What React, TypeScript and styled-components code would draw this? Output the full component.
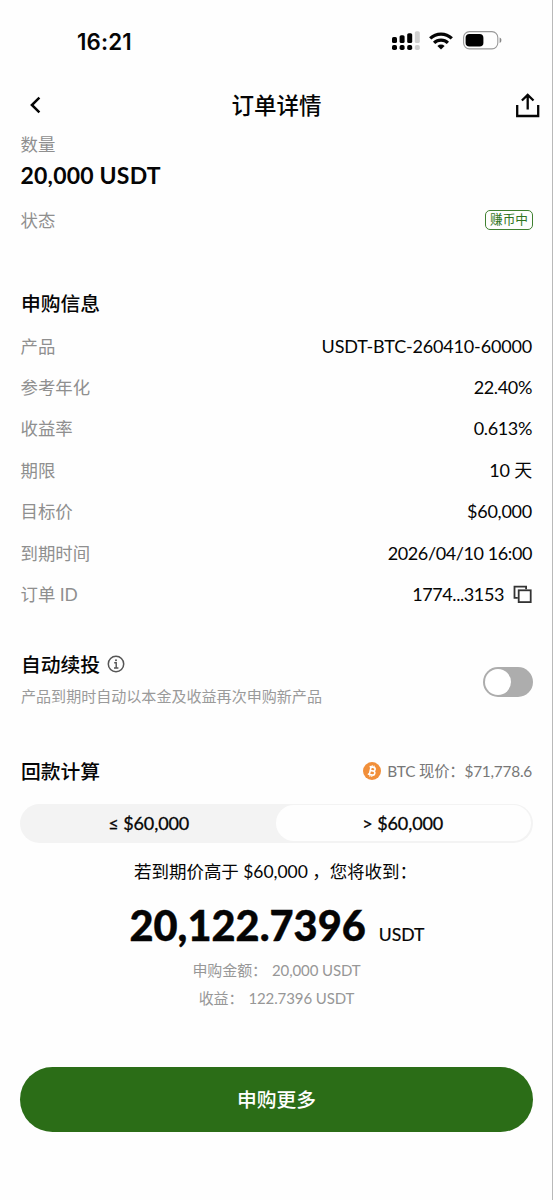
import React from 'react';
import styled, { createGlobalStyle, css } from 'styled-components';

const Global = createGlobalStyle`
  * { box-sizing: border-box; }
  body {
    margin: 0;
    background: #fefefe;
    color: #050505;
    font-family: Lato, "Noto Sans CJK SC", sans-serif;
    font-variant-ligatures: none;
  }
  button { font: inherit; color: inherit; border: 0; padding: 0; background: none; }
`;

const Screen = styled.main`
  width: 553px;
  height: 1200px;
  padding: 0 19px 0 21px;
  border-right: 1px solid #b9b9b9;
  display: flex;
  flex-direction: column;
  overflow: hidden;
`;

const StatusBar = styled.div`
  height: 82px;
  flex: none;
  display: flex;
  align-items: center;
  justify-content: space-between;
  padding: 0 31px 0 56px;
`;

const Clock = styled.span`
  font: 600 22.3px/26px Inter, sans-serif;
  letter-spacing: 0.15px;
  padding-top: 2px;
`;

const StatusIcons = styled.div`
  display: flex;
  align-items: center;
  margin-top: -1px;
`;

const Header = styled.header`
  height: 47px;
  flex: none;
  display: grid;
  grid-template-columns: 60px 1fr 60px;
  align-items: center;
  margin-right: -7px;
`;

const Title = styled.h1`
  margin: 0;
  padding: 1px 8px 0 0;
  text-align: center;
  font-size: 22.5px;
  line-height: 32px;
  font-weight: 500;
`;

const IconButton = styled.button<{ $end?: boolean }>`
  display: flex;
  height: 32px;
  align-items: center;
  margin-bottom: 2px;
  justify-content: ${(p) => (p.$end ? 'flex-end' : 'flex-start')};
`;

const Label = styled.span`
  font-size: 17.4px;
  line-height: 26px;
  margin-left: -0.5px;
  color: #8f8f8f;
`;

const Amount = styled.div`
  font-size: 23px;
  line-height: 32px;
  font-weight: 700;
  letter-spacing: 0.2px;
  margin: 1px 0 0 -0.5px;
`;

const Summary = styled.section`
  display: flex;
  flex-direction: column;
  padding-top: 3px;
`;

const StatusRow = styled.div`
  display: flex;
  align-items: center;
  justify-content: space-between;
  height: 26px;
  margin-top: 17px;
`;

const Tag = styled.span`
  height: 20px;
  width: 48px;
  margin-bottom: 2px;
  border: 1.5px solid #3f8030;
  border-radius: 5px;
  color: #2f7420;
  font-size: 12.7px;
  line-height: 17px;
  text-align: center;
`;

const SectionTitle = styled.h2`
  margin: 0;
  font-size: 19.8px;
  line-height: 30px;
  font-weight: 500;
`;

const Info = styled.section`
  margin-top: 54px;
`;

const InfoRow = styled.div`
  height: 41.4px;
  padding-right: 1px;
  display: flex;
  align-items: center;
  justify-content: space-between;
`;

const InfoList = styled.div`
  margin-top: 8px;
`;

const Value = styled.span<{ $spacing?: number }>`
  display: flex;
  align-items: center;
  gap: 9px;
  margin-bottom: 2px;
  font-size: 18px;
  line-height: 26px;
  letter-spacing: ${(p) => p.$spacing ?? 0}px;
`;

const Renew = styled.section`
  margin-top: 33px;
  display: flex;
  align-items: center;
  justify-content: space-between;
`;

const RenewTitle = styled.div`
  display: flex;
  align-items: center;
  gap: 7px;
`;

const Hint = styled.p`
  margin: 5px 0 0;
  font-size: 15.05px;
  line-height: 24px;
  color: #9a9a9a;
`;

const Switch = styled.button`
  width: 50px;
  height: 30px;
  border-radius: 15px;
  background: #adadad;
  padding: 2px;
  margin-top: 8px;
  display: flex;
`;

const Knob = styled.span`
  width: 26px;
  height: 26px;
  border-radius: 50%;
  background: #fff;
`;

const PayoutHead = styled.div`
  margin-top: 48px;
  display: flex;
  align-items: center;
  justify-content: space-between;
`;

const Price = styled.div`
  display: flex;
  align-items: center;
  gap: 6px;
  padding-right: 1px;
  font-size: 15.4px;
  line-height: 24px;
  letter-spacing: -0.23px;
  color: #777;
`;

const Tabs = styled.div`
  flex: none;
  height: 39px;
  margin: 18px 0 0 -1px;
  padding: 1.5px 2px;
  border-radius: 20px;
  background: #f3f3f3;
  display: grid;
  grid-template-columns: 1fr 1fr;
`;

const Tab = styled.button<{ $active?: boolean }>`
  border-radius: 18px;
  font-size: 18px;
  line-height: 35px;
  padding-right: 1px;
  letter-spacing: -0.1px;
  -webkit-text-stroke: 0.3px currentColor;
  ${(p) => p.$active && css`
    background: #fefefe;
    margin-left: -1px;
  `}
`;

const Result = styled.section`
  display: flex;
  flex-direction: column;
  align-items: center;
`;

const Condition = styled.p`
  margin: 16px 3px 0 0;
  font-size: 17.5px;
  line-height: 26px;
  letter-spacing: -0.05px;
  white-space: pre;
`;

const Total = styled.div`
  margin-top: 12px;
  display: flex;
  align-items: baseline;
  gap: 13px;
  line-height: 56px;
`;

const TotalNumber = styled.strong`
  font-size: 41.5px;
  font-weight: 900;
  -webkit-text-stroke: 0.4px currentColor;
`;

const Unit = styled.span`
  font-size: 17.6px;
  -webkit-text-stroke: 0.2px currentColor;
`;

const Detail = styled.div`
  display: flex;
  gap: 5px;
  font-size: 15px;
  line-height: 24px;
  letter-spacing: -0.1px;
  margin: 0 1px 4px 0;
  color: #979797;
`;

const Details = styled.div`
  display: flex;
  flex-direction: column;
  align-items: center;
  margin-top: -5px;
`;

const Primary = styled.button`
  flex: none;
  height: 65px;
  margin: 53px 0 0 -1px;
  padding-bottom: 2px;
  border-radius: 33px;
  background: #2b6d17;
  color: #fff;
  font-size: 19.8px;
  font-weight: 500;
`;

const Signal = () => (
  <svg width="28" height="20" viewBox="0 0 28 20">
    <rect x="0" y="6" width="5" height="6" rx="1.6" />
    <rect x="7.6" y="4.2" width="5" height="7.8" rx="1.6" />
    <rect x="15.2" y="2.2" width="5" height="9.8" rx="1.6" />
    <rect x="22.8" y="0.2" width="5" height="11.8" rx="1.6" fill="#d0d0d0" />
    <rect x="0" y="14" width="5" height="5" rx="1.8" />
    <rect x="7.6" y="14" width="5" height="5" rx="1.8" />
    <rect x="15.2" y="14" width="5" height="5" rx="1.8" />
    <rect x="22.8" y="14" width="5" height="5" rx="1.8" fill="#d0d0d0" />
  </svg>
);

const WifiMark = styled.svg`
  margin-left: 9px;
`;

const Wifi = () => (
  <WifiMark width="24" height="18" viewBox="0 0 24 18" fill="none" stroke="#050505" strokeWidth="3.2">
    <path d="M1.2 6.4A15.6 15.6 0 0 1 22.8 6.4" />
    <path d="M5.1 10.9A9.8 9.8 0 0 1 18.9 10.9" />
    <path d="M8.4 13.9a5.2 5.2 0 0 1 7.2 0L12 17.6z" fill="#050505" stroke="none" />
  </WifiMark>
);

const BatteryMark = styled.svg`
  margin-left: 10px;
`;

const Battery = () => (
  <BatteryMark width="39" height="19" viewBox="0 0 39 19">
    <rect x="0.6" y="0.6" width="34.2" height="17.3" rx="5.8" fill="none" stroke="#999" strokeWidth="1.1" />
    <rect x="2.6" y="2.9" width="17.8" height="12.6" rx="3.8" />
    <path d="M36.6 6.6c2.4.6 2.4 4.8 0 5.4z" fill="#888" />
  </BatteryMark>
);

const Back = () => (
  <svg width="26" height="24" viewBox="0 0 26 24" fill="none" stroke="#050505" strokeWidth="2.5">
    <path d="M18.4 4.7 10.9 12l7.5 7.4" />
  </svg>
);

const Share = () => (
  <svg width="26" height="26" viewBox="0 0 26 26" fill="none" stroke="#050505" strokeWidth="2.3">
    <path d="M3.2 13v11h21V13M13.7 17.5V3M7.9 8.5l5.8-5.6 5.8 5.6" />
  </svg>
);

const Copy = () => (
  <svg width="19" height="19" viewBox="0 0 19 19" fill="none" stroke="#333" strokeWidth="1.8">
    <path d="M4.8 12.9H1.5V1.6h11.6v2.6" />
    <rect x="5.7" y="5.3" width="12" height="11.8" />
  </svg>
);

const InfoIcon = () => (
  <svg width="18" height="18" viewBox="0 0 18 18" fill="none" stroke="#555" strokeWidth="1.5">
    <circle cx="9" cy="9" r="7.7" />
    <path d="M7.2 7.8h2v5.2M7 13h4.4" strokeWidth="1.4" />
    <circle cx="9" cy="5.2" r="1" fill="#555" stroke="none" />
  </svg>
);

const Bitcoin = () => (
  <svg width="18" height="18" viewBox="0 0 18 18">
    <circle cx="9" cy="9" r="9" fill="#f18f3a" />
    <g transform="rotate(13 9 9)" fill="none" stroke="#fff" strokeWidth="1.6">
      <path d="M5.6 5.1h4.2a1.8 1.8 0 0 1 0 3.7H7.3h2.9a2 2 0 0 1 0 4.1H5.6M7.2 5.1v7.8" />
      <path d="M8 3.2v2M10 3.2v2M8 12.9v2M10 12.9v2" strokeWidth="1.1" />
    </g>
  </svg>
);

const rows: { label: string; value: string; spacing: number; copy?: boolean }[] = [
  { label: '产品', value: 'USDT-BTC-260410-60000', spacing: -0.17 },
  { label: '参考年化', value: '22.40%', spacing: -0.35 },
  { label: '收益率', value: '0.613%', spacing: -0.35 },
  { label: '期限', value: '10 天', spacing: -0.2 },
  { label: '目标价', value: '$60,000', spacing: -0.25 },
  { label: '到期时间', value: '2026/04/10 16:00', spacing: -0.4 },
  { label: '订单 ID', value: '1774...3153', spacing: -0.4, copy: true },
];

export default function App() {
  return (
    <>
      <Global />
      <Screen>
        <StatusBar>
          <Clock>16:21</Clock>
          <StatusIcons>
            <Signal />
            <Wifi />
            <Battery />
          </StatusIcons>
        </StatusBar>
        <Header>
          <IconButton aria-label="返回"><Back /></IconButton>
          <Title>订单详情</Title>
          <IconButton $end aria-label="分享"><Share /></IconButton>
        </Header>
        <Summary>
          <Label>数量</Label>
          <Amount>20,000 USDT</Amount>
          <StatusRow>
            <Label>状态</Label>
            <Tag>赚币中</Tag>
          </StatusRow>
        </Summary>
        <Info>
          <SectionTitle>申购信息</SectionTitle>
          <InfoList>
            {rows.map((r) => (
              <InfoRow key={r.label}>
                <Label>{r.label}</Label>
                <Value $spacing={r.spacing}>
                  {r.value}
                  {r.copy && <Copy />}
                </Value>
              </InfoRow>
            ))}
          </InfoList>
        </Info>
        <Renew>
          <div>
            <RenewTitle>
              <SectionTitle>自动续投</SectionTitle>
              <InfoIcon />
            </RenewTitle>
            <Hint>产品到期时自动以本金及收益再次申购新产品</Hint>
          </div>
          <Switch role="switch" aria-checked="false" aria-label="自动续投"><Knob /></Switch>
        </Renew>
        <PayoutHead>
          <SectionTitle>回款计算</SectionTitle>
          <Price>
            <Bitcoin />
            <span>BTC 现价：$71,778.6</span>
          </Price>
        </PayoutHead>
        <Tabs>
          <Tab>≤ $60,000</Tab>
          <Tab $active>&gt; $60,000</Tab>
        </Tabs>
        <Result>
          <Condition>若到期价高于 $60,000 ，您将收到：</Condition>
          <Total>
            <TotalNumber>20,122.7396</TotalNumber>
            <Unit>USDT</Unit>
          </Total>
          <Details>
            <Detail><span>申购金额：</span><span>20,000 USDT</span></Detail>
            <Detail><span>收益：</span><span>122.7396 USDT</span></Detail>
          </Details>
        </Result>
        <Primary>申购更多</Primary>
      </Screen>
    </>
  );
}
